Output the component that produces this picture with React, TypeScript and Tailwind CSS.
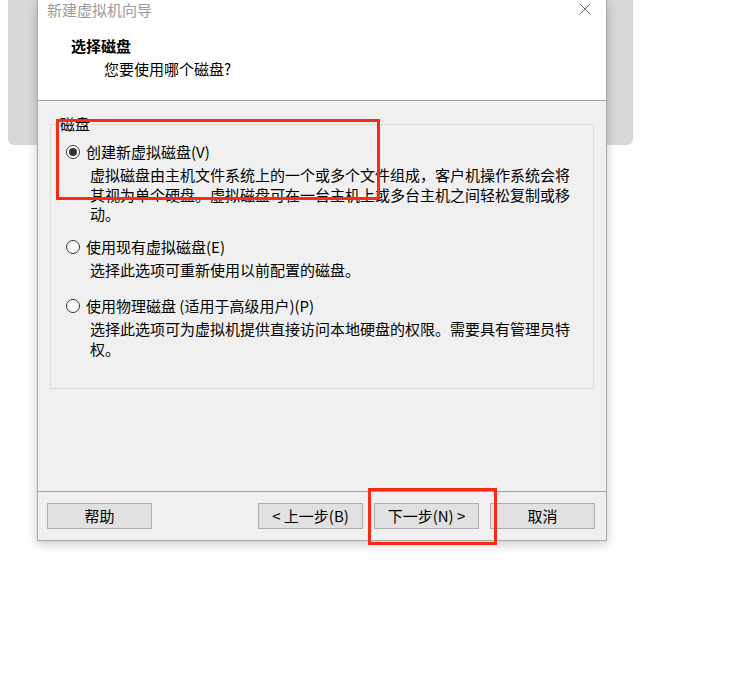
import React from 'react'

interface DiskOption {
    id: string
    label: string
    hotkey: string
    description: string
    checked: boolean
}

const options: DiskOption[] = [
    {
        id: 'new',
        label: '创建新虚拟磁盘',
        hotkey: '(V)',
        description: '虚拟磁盘由主机文件系统上的一个或多个文件组成，客户机操作系统会将其视为单个硬盘。虚拟磁盘可在一台主机上或多台主机之间轻松复制或移动。',
        checked: true
    },
    {
        id: 'existing',
        label: '使用现有虚拟磁盘',
        hotkey: '(E)',
        description: '选择此选项可重新使用以前配置的磁盘。',
        checked: false
    },
    {
        id: 'physical',
        label: '使用物理磁盘 (适用于高级用户)',
        hotkey: '(P)',
        description: '选择此选项可为虚拟机提供直接访问本地硬盘的权限。需要具有管理员特权。',
        checked: false
    }
]

const Radio = ({ checked }: { checked: boolean }) => (
    <span className="flex items-center justify-center w-[14px] h-[14px] rounded-full border border-[#333333] bg-white">
        {checked && <span className="w-[8px] h-[8px] rounded-full bg-[#333333]" />}
    </span>
)

const Button = ({ children }: { children: React.ReactNode }) => (
    <button className="w-[105px] h-[26px] bg-[#e1e1e1] border border-[#adadad] text-[15px] leading-[24px] text-black">
        {children}
    </button>
)

const App = () => {
    return (
        <div className="relative w-[733px] h-[683px] bg-white overflow-hidden font-['Noto_Sans_CJK_SC',sans-serif] text-black">
            {/* window behind the wizard */}
            <div className="absolute left-[8px] top-0 w-[625px] h-[145px] bg-[#d8d8d8] rounded-b-[6px]" />

            {/* wizard dialog */}
            <div className="absolute left-[37px] top-0 w-[570px] h-[541px] flex flex-col bg-[#f0f0f0] border border-t-0 border-[#a8a8a8] shadow-[0_3px_10px_rgba(0,0,0,0.22)]">
                <div className="h-[101px] bg-white border-b border-[#a0a0a0] flex flex-col">
                    <div className="h-[20px] flex items-center justify-between pl-[9px] pr-[15px]">
                        <span className="text-[15px] leading-[20px] text-[#9a9a9a]">新建虚拟机向导</span>
                        <svg width="12" height="12" viewBox="0 0 12 12" className="-mt-[2px]">
                            <path d="M0.5 0.5 L11.5 11.5 M11.5 0.5 L0.5 11.5" stroke="#6a6a6a" strokeWidth="1" fill="none" />
                        </svg>
                    </div>
                    <h1 className="mt-[16px] pl-[33px] text-[15px] leading-[20px] font-bold">选择磁盘</h1>
                    <p className="mt-[3px] pl-[66px] text-[15px] leading-[20px]">您要使用哪个磁盘?</p>
                </div>

                <div className="flex-1 px-[12px] pt-[13px]">
                    <fieldset className="h-[275px] border border-[#dcdcdc] px-[15px] pt-[8px]">
                        <legend className="-ml-[7px] px-[1px] text-[15px] leading-[20px]">磁盘</legend>
                        {options.map((option, i) => (
                            <div key={option.id} className={i === 0 ? 'mb-[13px]' : 'mb-[17px]'}>
                                <label className="flex items-center gap-[6px] h-[20px] text-[15px]">
                                    <Radio checked={option.checked} />
                                    <span className="leading-[20px]">
                                        {option.label}{option.hotkey}
                                    </span>
                                </label>
                                <p className="mt-[3px] ml-[24px] w-[486px] text-[15px] leading-[19.5px]">
                                    {option.description}
                                </p>
                            </div>
                        ))}
                    </fieldset>
                </div>

                <div className="h-[49px] border-t border-[#a0a0a0] flex items-start pt-[11px] pl-[9px] pr-[11px]">
                    <Button>帮助</Button>
                    <div className="ml-auto flex gap-[11px]">
                        <Button>&lt; 上一步(B)</Button>
                        <Button>下一步(N) &gt;</Button>
                        <Button>取消</Button>
                    </div>
                </div>
            </div>

            {/* red highlight marks */}
            <div className="absolute left-[56px] top-[119px] w-[324px] h-[81px] border-[3px] border-[#fb2a14]" />
            <div className="absolute left-[368px] top-[488px] w-[129px] h-[57px] border-[3px] border-[#fb2a14]" />
        </div>
    )
}

export default App
